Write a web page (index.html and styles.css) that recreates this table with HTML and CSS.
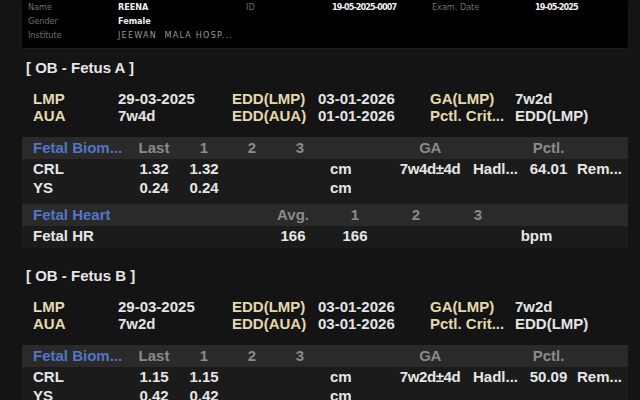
FILE: index.html
```html
<!DOCTYPE html>
<html>
<head>
<meta charset="utf-8">
<link rel="stylesheet" href="styles.css">
</head>
<body>
<div class="patient">
  <div class="prow"><span class="pl">Name</span><span class="pv">REENA</span><span class="pl">ID</span><span class="pv num">19-05-2025-0007</span><span class="pl">Exam. Date</span><span class="pv num">19-05-2025</span></div>
  <div class="prow"><span class="pl">Gender</span><span class="pv">Female</span></div>
  <div class="prow"><span class="pl">Institute</span><span class="pv dim">JEEWAN&nbsp; MALA HOSP...</span></div>
</div>

<section class="fetus">
  <h2 class="title">[ OB - Fetus A ]</h2>
  <div class="info">
    <span class="lbl">LMP</span><span class="val">29-03-2025</span><span class="lbl">EDD(LMP)</span><span class="val">03-01-2026</span><span class="lbl">GA(LMP)</span><span class="val">7w2d</span>
    <span class="lbl">AUA</span><span class="val">7w4d</span><span class="lbl">EDD(AUA)</span><span class="val">01-01-2026</span><span class="lbl">Pctl. Crit...</span><span class="val">EDD(LMP)</span>
  </div>
  <div class="table">
    <div class="thead bio"><span class="c-name grp">Fetal Biom...</span><span class="c-last">Last</span><span class="c-1">1</span><span class="c-2">2</span><span class="c-3">3</span><span class="c-unit"></span><span class="c-ga">GA</span><span class="c-meth"></span><span class="c-pct">Pctl.</span><span class="c-rem"></span></div>
    <div class="trow bio"><span class="c-name">CRL</span><span class="c-last">1.32</span><span class="c-1">1.32</span><span class="c-2"></span><span class="c-3"></span><span class="c-unit">cm</span><span class="c-ga">7w4d±4d</span><span class="c-meth">Hadl...</span><span class="c-pct">64.01</span><span class="c-rem">Rem...</span></div>
    <div class="trow bio"><span class="c-name">YS</span><span class="c-last">0.24</span><span class="c-1">0.24</span><span class="c-2"></span><span class="c-3"></span><span class="c-unit">cm</span></div>
    <div class="thead heart"><span class="h-name grp">Fetal Heart</span><span class="h-avg">Avg.</span><span class="h-1">1</span><span class="h-2">2</span><span class="h-3">3</span><span class="h-unit"></span></div>
    <div class="trow heart"><span class="h-name">Fetal HR</span><span class="h-avg">166</span><span class="h-1">166</span><span class="h-2"></span><span class="h-3"></span><span class="h-unit">bpm</span></div>
  </div>
</section>

<section class="fetus b">
  <h2 class="title">[ OB - Fetus B ]</h2>
  <div class="info">
    <span class="lbl">LMP</span><span class="val">29-03-2025</span><span class="lbl">EDD(LMP)</span><span class="val">03-01-2026</span><span class="lbl">GA(LMP)</span><span class="val">7w2d</span>
    <span class="lbl">AUA</span><span class="val">7w2d</span><span class="lbl">EDD(AUA)</span><span class="val">03-01-2026</span><span class="lbl">Pctl. Crit...</span><span class="val">EDD(LMP)</span>
  </div>
  <div class="table">
    <div class="thead bio"><span class="c-name grp">Fetal Biom...</span><span class="c-last">Last</span><span class="c-1">1</span><span class="c-2">2</span><span class="c-3">3</span><span class="c-unit"></span><span class="c-ga">GA</span><span class="c-meth"></span><span class="c-pct">Pctl.</span><span class="c-rem"></span></div>
    <div class="trow bio"><span class="c-name">CRL</span><span class="c-last">1.15</span><span class="c-1">1.15</span><span class="c-2"></span><span class="c-3"></span><span class="c-unit">cm</span><span class="c-ga">7w2d±4d</span><span class="c-meth">Hadl...</span><span class="c-pct">50.09</span><span class="c-rem">Rem...</span></div>
    <div class="trow bio"><span class="c-name">YS</span><span class="c-last">0.42</span><span class="c-1">0.42</span><span class="c-2"></span><span class="c-3"></span><span class="c-unit">cm</span></div>
  </div>
</section>
</body>
</html>
```
FILE: styles.css
```css
html, body {
  margin: 0;
  padding: 0;
  background: #141414;
  height: 400px;
  overflow: hidden;
}
body {
  font-family: "Liberation Sans", Arial, sans-serif;
  color: #e2e2e2;
}
.patient {
  margin-left: 22px;
  width: 606px;
  height: 48px;
  padding-left: 6px;
  background: #000;
  border-radius: 0 0 2px 2px;
  box-shadow: 0 1px 2px rgba(255,255,255,0.06);
  box-sizing: border-box;
  font-family: "DejaVu Sans Condensed", "Liberation Sans Narrow", sans-serif;
  font-size: 9px;
  font-weight: bold;
}
.prow {
  display: grid;
  grid-template-columns: 90px 128px 86px 100px 103px 1fr;
  line-height: 14px;
  height: 14px;
}
.pl { color: #707070; font-weight: normal; }
.pv { color: #f0f0f0; }
.pv.num { letter-spacing: -0.9px; }
.pv.dim { color: #9a9a9a; font-weight: normal; letter-spacing: 1.2px; }

.fetus {
  margin-left: 22px;
  width: 606px;
}
.title {
  margin: 12px 0 0 4px;
  font-size: 15px;
  line-height: 16px;
  font-weight: bold;
  color: #e6e6e6;
}
.fetus.b .title { margin-top: 20px; }
.info {
  margin-top: 14px;
  padding-left: 11px;
  display: grid;
  grid-template-columns: 85px 114px 86px 112px 85px 1fr;
  font-size: 15px;
  font-weight: bold;
  line-height: 17px;
  white-space: nowrap;
}
.lbl { color: #e4d8ae; }
.val { color: #e4e4e4; }

.table {
  margin-top: 13px;
  background: #1b1b1b;
  padding-bottom: 3px;
  font-size: 15px;
  font-weight: bold;
  white-space: nowrap;
}
.thead, .trow {
  display: flex;
  padding-left: 11px;
}
.thead {
  height: 22px;
  line-height: 22px;
  background: #2a2a2a;
  color: #8a8a8a;
}
.thead.heart { margin-top: 7px; }
.trow {
  height: 19px;
  line-height: 19px;
  color: #e6e6e6;
}
.grp { color: #5575c6; }
.thead > span, .trow > span { flex: none; }

.c-name { width: 97px; }
.c-last { width: 48px; text-align: center; }
.c-1 { width: 52px; text-align: center; }
.c-2 { width: 44px; text-align: center; }
.c-3 { width: 52px; text-align: center; }
.c-unit { width: 64px; padding-left: 4px; box-sizing: border-box; }
.c-ga { width: 80px; text-align: center; letter-spacing: -0.4px; }
.c-meth { width: 55px; padding-left: 3px; box-sizing: border-box; }
.c-pct { width: 47px; text-align: center; }
.c-rem { width: 56px; padding-left: 5px; box-sizing: border-box; }

.h-name { width: 227px; }
.h-avg { width: 66px; text-align: center; }
.h-1 { width: 58px; text-align: center; }
.h-2 { width: 64px; text-align: center; }
.h-3 { width: 60px; text-align: center; }
.h-unit { width: 57px; text-align: center; }
```
